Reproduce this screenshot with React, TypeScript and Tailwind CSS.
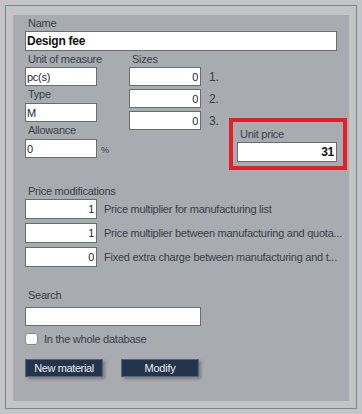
import React from "react";

const font = { fontFamily: '"Liberation Sans", Arial, sans-serif' };

function Label({ text, h, pl = 3 }: { text: string; h: string; pl?: number }) {
  return (
    <div className={`${h} pt-[1px] leading-[14px] whitespace-nowrap text-[#3a3e4a] ${pl === 3 ? "pl-[3px]" : "pl-0"}`}>
      {text}
    </div>
  );
}

function Box({
  value,
  cls,
  right,
  bold,
}: {
  value: string;
  cls: string;
  right?: boolean;
  bold?: boolean;
}) {
  return (
    <input
      readOnly
      value={value}
      className={`${cls} shrink-0 border border-[#6c6c6c] bg-white outline-none text-[#1f2436] ${
        right ? "text-right pr-[2px] pl-0" : "text-left pl-[1px] pr-0"
      } ${bold ? "font-bold text-[12px] text-[#111]" : "text-[11px]"}`}
      style={font}
    />
  );
}

export default function App() {
  return (
    <div
      className="w-[362px] h-[414px] bg-[#c4c4c4] p-[5px] text-[11px] tracking-[-0.25px]"
      style={font}
    >
      <div className="w-[352px] h-[404px] border border-[#6b8c9b] pl-[7px] pt-[9px]">
        <div className="w-[336px] h-[386px] bg-[#a8abb0] pl-[12px] flex flex-col">
          <Label text="Name" h="h-[16px]" />
          <Box value="Design fee" cls="w-[312px] h-[20px]" bold />
          <div className="flex">
            <div className="w-[104px] flex flex-col">
              <Label text="Unit of measure" h="h-[16px]" />
              <Box value="pc(s)" cls="w-[72px] h-[19px]" />
              <Label text="Type" h="h-[17px]" />
              <Box value="M" cls="w-[72px] h-[19px]" />
              <Label text="Allowance" h="h-[17px]" />
              <div className="flex items-center">
                <Box value="0" cls="w-[72px] h-[19px]" />
                <span className="ml-[4px] mt-[4px] text-[9px] text-[#3a3e4a]">%</span>
              </div>
            </div>
            <div className="flex flex-col">
              <Label text="Sizes" h="h-[16px]" />
              <div className="flex flex-col gap-[3px]">
                {["1.", "2.", "3."].map((n) => (
                  <div key={n} className="flex items-center">
                    <Box value="0" cls="w-[72px] h-[19px]" right />
                    <span className="ml-[8px] w-[12px] text-[12px] text-[#3a3e4a]">{n}</span>
                  </div>
                ))}
              </div>
            </div>
            <div className="ml-[8px] mt-[67px] w-[118px] h-[52px] border-4 border-[#e3202a] px-[4px] pt-[4px] flex flex-col">
              <Label text="Unit price" h="h-[16px]" />
              <Box value="31" cls="w-[100px] h-[20px]" right bold />
            </div>
          </div>
          <div className="mt-[13px]">
            <Label text="Price modifications" h="h-[16px]" />
          </div>
          <div className="flex flex-col gap-[4px]">
            {[
              ["1", "Price multiplier for manufacturing list"],
              ["1", "Price multiplier between manufacturing and quota..."],
              ["0", "Fixed extra charge between manufacturing and t..."],
            ].map(([v, t]) => (
              <div key={t} className="flex items-center h-[20px]">
                <Box value={v} cls="w-[72px] h-[20px]" right />
                <span className="ml-[7px] whitespace-nowrap text-[#3a3e4a]">{t}</span>
              </div>
            ))}
          </div>
          <div className="mt-[20px]">
            <Label text="Search" h="h-[20px]" />
          </div>
          <Box value="" cls="w-[176px] h-[19px]" />
          <div className="mt-[7px] flex items-center h-[12px]">
            <div className="w-[13px] h-[12px] bg-white border border-[#8a8a8a] rounded-[3px]" />
            <span className="ml-[6px] text-[#3a3e4a] whitespace-nowrap">In the whole database</span>
          </div>
          <div className="mt-[14px] flex gap-[18px]">
            <div className="w-[78px] h-[18px] bg-[#24344a] border border-[#56667a] shadow-[2px_2px_3px_rgba(0,0,0,0.28)] flex items-center justify-center text-[#e8eef6] text-[11px] tracking-[-0.4px]">
              New material
            </div>
            <div className="w-[78px] h-[18px] bg-[#24344a] border border-[#56667a] shadow-[2px_2px_3px_rgba(0,0,0,0.28)] flex items-center justify-center text-[#e8eef6] text-[11px]">
              Modify
            </div>
          </div>
        </div>
      </div>
    </div>
  );
}
